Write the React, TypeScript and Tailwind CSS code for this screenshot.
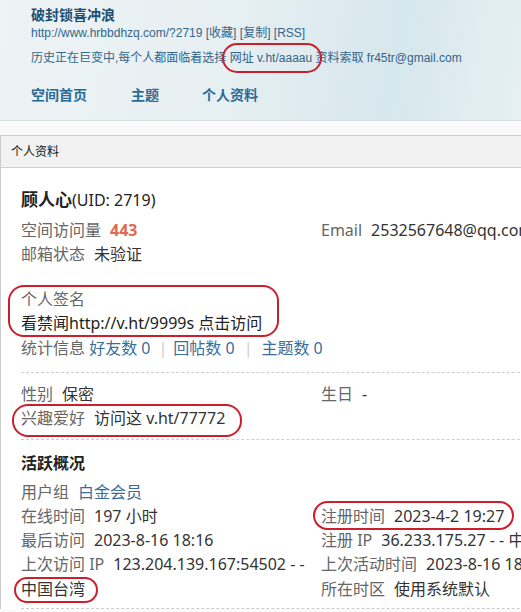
const cjk = "font-['Noto_Sans','Noto_Sans_CJK_SC',sans-serif]";

function Row({ label, children, className = "" }: { label: string; children?: React.ReactNode; className?: string }) {
  return (
    <li className={"float-left w-[300px] leading-[24.25px] " + className}>
      <em className="not-italic text-[#666] mr-[9px]">{label}</em>
      <span className="text-[#333]">{children}</span>
    </li>
  );
}

function Mark({ className }: { className: string }) {
  return <div className={"pointer-events-none absolute rounded-[16px] border-[2.5px] border-[#cc1f2b] " + className} />;
}

export default function App() {
  return (
    <div className="relative h-[612px] w-[521px] overflow-hidden bg-[#fafafa]">
      {/* space header */}
      <div className="h-[121px] border-b border-[#d6dfe2] bg-[linear-gradient(100deg,#eef3f5_0%,#e6eff2_45%,#d6e7ed_75%,#e6f0f3_100%)] pl-[31px] pt-[6px] font-['Liberation_Sans','Noto_Sans_CJK_SC',sans-serif]">
        <h1 className="text-[14px] font-bold leading-[18px] text-[#1f4f6f]">破封锁喜冲浪</h1>
        <p className="mt-[1px] text-[12px] leading-[16px] text-[#33668a]">
          http://www.hrbbdhzq.com/?2719 <a>[收藏]</a> <a>[复制]</a> <a>[RSS]</a>
        </p>
        <p className="mt-[9px] text-[12px] leading-[16px] text-[#33668a]">
          历史正在巨变中,每个人都面临着选择 网址 v.ht/aaaau 资料索取 fr45tr@gmail.com
        </p>
        <nav className="mt-[20px] flex text-[14px] font-bold leading-[18px] text-[#2a6a96]">
          <a className="w-[100px]">空间首页</a>
          <a className="w-[71px]">主题</a>
          <a>个人资料</a>
        </nav>
      </div>

      {/* profile panel */}
      <div className={"mt-[14px] w-[700px] border-l border-t border-[#cdcdcd] bg-white " + cjk}>
        <div className="h-[32px] border-b border-[#c2d4e0] bg-[#f2f2f2] pl-[10px] text-[12px] leading-[32px] text-[#111]">个人资料</div>
        <div className="px-[20px] pt-[20px] text-[16px]">
          <h2 className="leading-[24px] text-[#222]">
            <span className="text-[17px] font-bold">顾人心</span>(UID: 2719)
          </h2>
          <ul className="mt-[6px] flow-root">
            <Row label="空间访问量">
              <strong className="text-[#e2694f]">443</strong>
            </Row>
            <Row label="Email">2532567648@qq.com</Row>
            <Row label="邮箱状态">未验证</Row>
          </ul>
          <ul className="mt-[20px] flow-root leading-[24.5px]">
            <li className="text-[#666]">个人签名</li>
            <li className="text-[#222]">看禁闻http://v.ht/9999s 点击访问</li>
            <li className="text-[#666]">
              统计信息 <a className="text-[#3a6e99]">好友数 0</a>
              <span className="ml-[8px] mr-[6px] text-[#ccc]">|</span>
              <a className="text-[#3a6e99]">回帖数 0</a>
              <span className="ml-[9px] mr-[9px] text-[#ccc]">|</span>
              <a className="text-[#3a6e99]">主题数 0</a>
            </li>
          </ul>
          <div className="mt-[12px] border-t border-dashed border-[#cdcdcd]" />
          <ul className="mt-[9px] flow-root">
            <Row label="性别">保密</Row>
            <Row label="生日">-</Row>
            <Row label="兴趣爱好">访问这 v.ht/77772</Row>
          </ul>
          <div className="mt-[8px] border-t border-dashed border-[#cdcdcd]" />
          <h2 className="mt-[11px] font-bold leading-[24px] text-[#222]">活跃概况</h2>
          <ul className="mt-[5px] flow-root">
            <Row label="用户组">
              <a className="text-[#3a6e99]">白金会员</a>
            </Row>
          </ul>
          <ul className="flow-root">
            <Row label="在线时间">197 小时</Row>
            <Row label="注册时间">2023-4-2 19:27</Row>
            <Row label="最后访问">2023-8-16 18:16</Row>
            <Row label="注册 IP">36.233.175.27 - - 中国台湾</Row>
            <Row label="上次访问 IP">
              123.204.139.167:54502 - - <span className="inline-block whitespace-nowrap">中国台湾</span>
            </Row>
            <Row label="上次活动时间">2023-8-16 18:16</Row>
            <Row label="所在时区">使用系统默认</Row>
          </ul>
          <div className="mt-[7px] border-t border-dashed border-[#cdcdcd]" />
        </div>
      </div>

      {/* red annotation marks */}
      <Mark className="left-[222px] top-[43px] h-[30px] w-[100px]" />
      <Mark className="left-[8px] top-[285px] h-[52px] w-[271px]" />
      <Mark className="left-[12px] top-[404px] h-[33px] w-[230px]" />
      <Mark className="left-[313px] top-[501px] h-[29px] w-[201px]" />
      <Mark className="left-[14px] top-[577px] h-[26px] w-[84px]" />
    </div>
  );
}
